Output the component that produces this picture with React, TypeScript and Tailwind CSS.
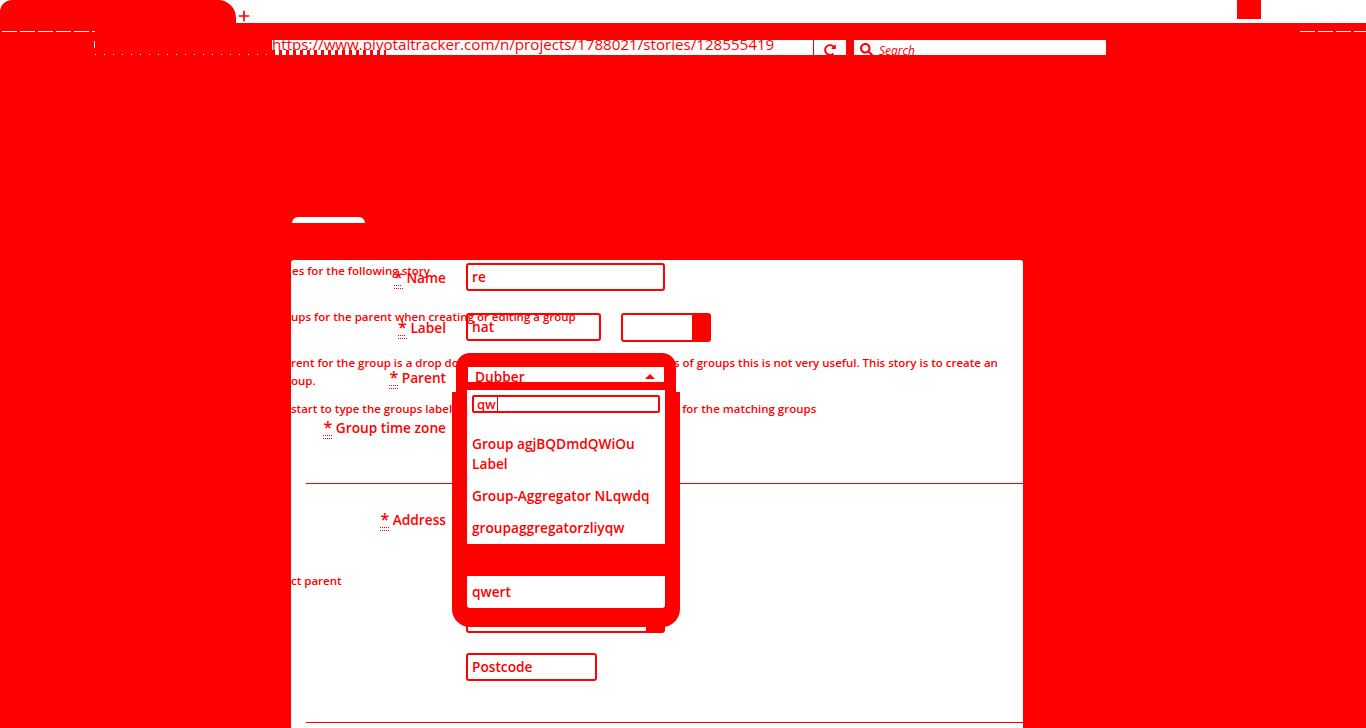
import React from 'react';
import { Plus } from 'lucide-react';
import { FaRedoAlt, FaSearch } from 'react-icons/fa';

const Req: React.FC<{ label: string }> = ({ label }) => (
  <span className="whitespace-nowrap">
    <span className="border-b border-dotted border-[#f00] text-[16px] underline decoration-dotted decoration-1 underline-offset-[2px]">*</span> {label}
  </span>
);

const FormRow: React.FC<{ label?: string; children?: React.ReactNode }> = ({ label, children }) => (
  <div className="flex h-[28px] items-center">
    <div className="w-[155px] text-right">{label && <Req label={label} />}</div>
    <div className="ml-[20px] flex gap-[20px]">{children}</div>
  </div>
);

const TextBox: React.FC<{ value: string; width: string }> = ({ value, width }) => (
  <div className={`${width} h-[28px] rounded-[3px] border-2 border-[#f00] px-[4px] leading-[24px]`}>{value}</div>
);

const SelectBox: React.FC<{ width: string }> = ({ width }) => (
  <div className={`${width} flex h-[29px] justify-end rounded-[3px] border-2 border-[#f00]`}>
    <div className="w-[17px] bg-[#f00]" />
  </div>
);

const Dropdown: React.FC = () => (
  <div className="absolute left-[161px] top-[93px] w-[228px]">
    <div className="mx-[4px] rounded-t-[14px] bg-[#f00] px-[12px] pb-[10px] pt-[14px]">
      <div className="flex h-[15px] items-center justify-between overflow-hidden bg-white pl-[7px] pr-[9px] pt-[4px] leading-[15px]">
        <span>Dubber</span>
        <span className="h-0 w-0 border-x-[5px] border-b-[5px] border-x-transparent border-b-[#f00]" />
      </div>
    </div>
    <div className="flow-root rounded-b-[18px] bg-[#f00] px-[15px] pb-[19px]">
      <div className="relative -mt-[2px] rounded-b-[3px] bg-white">
        <div className="px-[5px] pb-[21px] pt-[5px]">
          <div className="h-[18px] rounded-[2px] border-2 border-[#f00] pl-[3px] text-[13px] leading-[14px]">
            <span className="border-r border-[#f00] pr-px">qw</span>
          </div>
        </div>
        <div className="px-[5px] pb-[6px] leading-[20px]">Group agjBQDmdQWiOu<br />Label</div>
        <div className="h-[32px] px-[5px] leading-[32px]">Group-Aggregator NLqwdq</div>
        <div className="h-[32px] px-[5px] leading-[32px]">groupaggregatorzliyqw</div>
        <div className="h-[32px] bg-[#f00]" />
        <div className="h-[32px] px-[5px] leading-[32px]">qwert</div>
      </div>
    </div>
  </div>
);

export default function App() {
  return (
    <div className="flex h-[728px] w-[1366px] flex-col overflow-hidden bg-[#f00] font-['Open_Sans',sans-serif] text-[13.7px] font-semibold text-[#f00]">
      {/* tab strip */}
      <div className="flex h-[23px] bg-white">
        <div className="h-[23px] w-[236px] rounded-tl-[12px] rounded-tr-[18px] bg-[#f00]" />
        <Plus size={16} strokeWidth={2.5} className="mt-[8px]" />
        <div className="ml-auto mr-[105px] h-[19px] w-[24px] bg-[#f00]" />
      </div>

      {/* toolbar */}
      <div className="flex h-[32px] items-start">
        <div className="flex w-[95px] flex-col items-end pt-[8px]">
          <div className="h-px w-[93px] bg-[repeating-linear-gradient(90deg,#fff_0_15px,transparent_15px_18px)]" />
          <div className="mt-[9px] h-[7px] w-px bg-white" />
        </div>
        <div className="mt-[31px] h-px w-[177px] bg-[repeating-linear-gradient(90deg,#fff_0_1px,transparent_1px_9px)]" />
        <div className="relative mt-[17px] flex h-[15px] w-[541px] overflow-hidden bg-white text-[15.15px] font-medium leading-[9px] whitespace-nowrap">
          https://www.pivotaltracker.com/n/projects/1788021/stories/128555419
          <div className="absolute bottom-0 left-0 h-[5px] w-[114px] bg-[repeating-linear-gradient(90deg,#f00_0_3px,#fff_3px_7px)]" />
        </div>
        <div className="mt-[17px] flex h-[15px] w-[33px] justify-center overflow-hidden border-l border-[#f00] bg-white pt-[4px]">
          <FaRedoAlt size={12} />
        </div>
        <div className="ml-[8px] mt-[17px] flex h-[15px] w-[252px] gap-[6px] overflow-hidden bg-white pl-[6px] pt-[3px] text-[12px] font-medium italic leading-[15px]">
          <FaSearch size={13} />
          <span>Search</span>
        </div>
        <div className="ml-auto mt-[8px] h-px w-[66px] bg-[repeating-linear-gradient(90deg,#fff_0_15px,transparent_15px_18px)]" />
      </div>

      {/* story tab */}
      <div className="ml-[292px] mt-[162px] h-[6px] w-[73px] rounded-t-[6px] bg-white" />

      {/* card */}
      <div className="relative ml-[291px] mt-[37px] w-[732px] flex-1 overflow-hidden rounded-t-[3px] bg-white">
        {/* story description underneath */}
        <div className="whitespace-nowrap text-[11.5px] leading-[18px]">
          <p className="ml-px mt-[2px]">es for the following story</p>
          <p className="mt-[28px]">ups for the parent when creating or editing a group</p>
          <p className="mt-[28px]">rent for the group is a drop down with every group name but with lots of groups this is not very useful. This story is to create an</p>
          <p>oup.</p>
          <p className="mt-[10px]">start to type the groups label or name and it should show a dropdown for the matching groups</p>
          <p className="mt-[154px]">ct parent</p>
        </div>

        {/* group form on top */}
        <div className="absolute inset-0 pt-[3px]">
          <div className="flex flex-col gap-[22px]">
            <FormRow label="Name"><TextBox value="re" width="w-[199px]" /></FormRow>
            <FormRow label="Label">
              <TextBox value="hat" width="w-[135px]" />
              <SelectBox width="w-[90px]" />
            </FormRow>
            <FormRow label="Parent" />
            <FormRow label="Group time zone" />
          </div>
          <div className="ml-[15px] mt-[42px] border-t border-[#f00]" />
          <div className="mt-[21px] flex flex-col gap-[21px]">
            <div className="mb-px"><FormRow label="Address" /></div>
            <FormRow />
            <FormRow><SelectBox width="w-[199px]" /></FormRow>
            <FormRow><TextBox value="Postcode" width="w-[131px]" /></FormRow>
          </div>
          <div className="ml-[15px] mt-[41px] border-t border-[#f00]" />
        </div>

        <Dropdown />
      </div>
    </div>
  );
}
